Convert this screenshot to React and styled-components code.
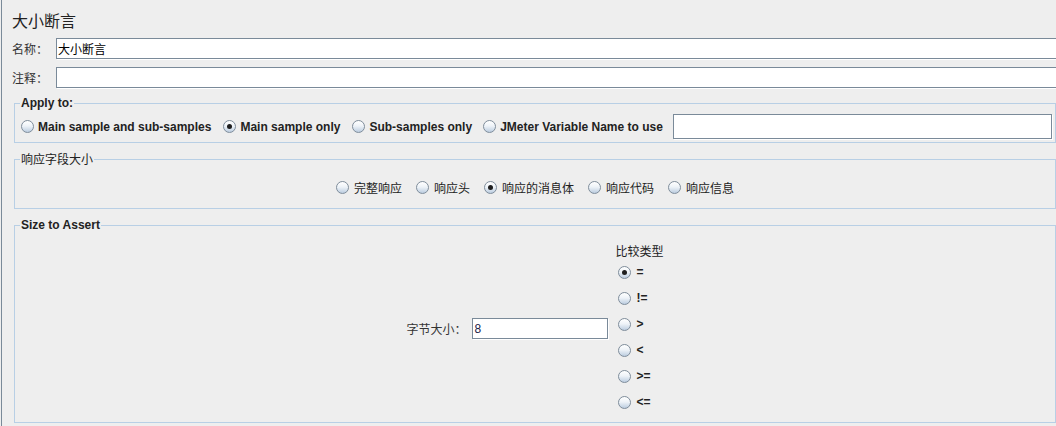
import React from 'react'
import styled, { createGlobalStyle } from 'styled-components'

const GlobalStyle = createGlobalStyle`
  html, body {
    margin: 0;
    padding: 0;
    background: #eeeeee;
  }
  body {
    font-family: "Liberation Sans", "Noto Sans CJK SC", sans-serif;
    font-size: 12px;
    color: #333333;
  }
`

const Page = styled.div`
  box-sizing: border-box;
  width: 1055px;
  height: 426px;
  margin-left: 1px;
  border-left: 1px solid #7a8a99;
  padding: 9px 0 0 10px;
  overflow: hidden;
`

const Title = styled.div`
  font-family: "Noto Sans CJK SC", sans-serif;
  font-size: 16px;
  line-height: 22px;
  height: 22px;
  margin-bottom: 7px;
  color: #222;
`

const FieldRow = styled.div`
  display: flex;
  align-items: center;
  height: 21px;
  margin-right: -30px;
  & + & {
    margin-top: 8px;
  }
`

const RowLabel = styled.label`
  width: 44px;
  flex: none;
  font-family: "Noto Sans CJK SC", sans-serif;
  font-size: 12px;
  line-height: 14px;
`

const TextField = styled.input`
  box-sizing: border-box;
  height: ${p => p.$h || 21}px;
  width: ${p => (p.$w ? `${p.$w}px` : 'auto')};
  flex: ${p => (p.$w ? 'none' : '1')};
  min-width: 0;
  margin: 0;
  padding: 0 1px;
  border: 1px solid #7a8a99;
  box-shadow: 1px 1px 0 #ffffff;
  background: #fff;
  font-family: "Liberation Sans", "Noto Sans CJK SC", sans-serif;
  font-size: 12px;
  color: ${p => p.$color || '#000'};
  outline: none;
`

const Group = styled.fieldset`
  margin: ${p => p.$mt}px 0 0 2px;
  padding: ${p => p.$pad};
  border: 1px solid #b8cfe5;
  min-width: 0;
`

const Legend = styled.legend`
  padding: 0 1px;
  margin-left: -1px;
  font-size: 12px;
  line-height: 14px;
  font-weight: ${p => (p.$bold ? 'bold' : 'normal')};
  font-family: ${p => (p.$bold ? '"Liberation Sans", sans-serif' : '"Noto Sans CJK SC", sans-serif')};
  color: #222;
`

const ApplyRow = styled.div`
  display: flex;
  align-items: center;
  height: 25px;
`

const CenterRow = styled.div`
  display: flex;
  justify-content: center;
  align-items: center;
  height: ${p => p.$h}px;
  gap: ${p => p.$gap || 0}px;
`

const Radio = styled.label`
  display: flex;
  align-items: center;
  gap: ${p => p.$gap || 5}px;
  flex: none;
  margin-right: ${p => p.$mr || 0}px;
  height: ${p => p.$h || 16}px;
  padding-left: ${p => p.$pl || 0}px;
  font-size: 12px;
  font-weight: ${p => (p.$bold ? 'bold' : 'normal')};
  font-family: ${p => (p.$cjk ? '"Noto Sans CJK SC", sans-serif' : '"Liberation Sans", sans-serif')};
  color: #222;
  white-space: nowrap;
`

const Dot = styled.span`
  box-sizing: border-box;
  width: 13px;
  height: 13px;
  flex: none;
  border-radius: 50%;
  border: 1px solid #7f8d9b;
  background: linear-gradient(180deg, #ffffff 0%, #eef3f8 45%, #bccde0 100%);
  display: flex;
  align-items: center;
  justify-content: center;
  &::after {
    content: '';
    display: ${p => (p.$on ? 'block' : 'none')};
    width: 5px;
    height: 5px;
    border-radius: 50%;
    background: #1e1e1e;
  }
`

const SizeLabel = styled.span`
  font-family: "Noto Sans CJK SC", sans-serif;
  font-size: 12px;
  width: 66px;
  flex: none;
`

const CompareBox = styled.div`
  display: flex;
  flex-direction: column;
  margin-left: 7px;
`

const CompareTitle = styled.div`
  font-family: "Noto Sans CJK SC", sans-serif;
  font-size: 12px;
  line-height: 17px;
  height: 17px;
  color: #222;
`

const RadioItem = ({ on, children, ...rest }) => (
  <Radio {...rest}>
    <Dot $on={on} />
    <span>{children}</span>
  </Radio>
)

const applyOptions = [
  { text: 'Main sample and sub-samples', mr: 12 },
  { text: 'Main sample only', on: true, mr: 12 },
  { text: 'Sub-samples only', mr: 11 },
  { text: 'JMeter Variable Name to use', mr: 10 }
]

const fieldOptions = ['完整响应', '响应头', '响应的消息体', '响应代码', '响应信息']
const compareOptions = ['=', '!=', '>', '<', '>=', '<=']

export default function App() {
  return (
    <>
      <GlobalStyle />
      <Page>
        <Title>大小断言</Title>
        <FieldRow>
          <RowLabel>名称：</RowLabel>
          <TextField defaultValue="大小断言" />
        </FieldRow>
        <FieldRow>
          <RowLabel>注释：</RowLabel>
          <TextField defaultValue="" />
        </FieldRow>

        <Group $mt={8} $pad="4px 3px 3px 6px">
          <Legend $bold>Apply to:</Legend>
          <ApplyRow>
            {applyOptions.map(o => (
              <RadioItem key={o.text} on={o.on} $bold $gap={4} $mr={o.mr}>
                {o.text}
              </RadioItem>
            ))}
            <TextField $h={25} />
          </ApplyRow>
        </Group>

        <Group $mt={9} $pad="13px 6px 13px 6px">
          <Legend>响应字段大小</Legend>
          <CenterRow $h={16} $gap={14}>
            {fieldOptions.map(t => (
              <RadioItem key={t} on={t === '响应的消息体'} $cjk>
                {t}
              </RadioItem>
            ))}
          </CenterRow>
        </Group>

        <Group $mt={9} $pad="10px 6px 7px 6px">
          <Legend $bold>Size to Assert</Legend>
          <CenterRow $h={173}>
            <SizeLabel>字节大小：</SizeLabel>
            <TextField $w={136} defaultValue="8" $color="#1c2248" />
            <CompareBox>
              <CompareTitle>比较类型</CompareTitle>
              {compareOptions.map(t => (
                <RadioItem key={t} on={t === '='} $bold $h={26} $pl={3}>
                  {t}
                </RadioItem>
              ))}
            </CompareBox>
          </CenterRow>
        </Group>
      </Page>
    </>
  )
}
